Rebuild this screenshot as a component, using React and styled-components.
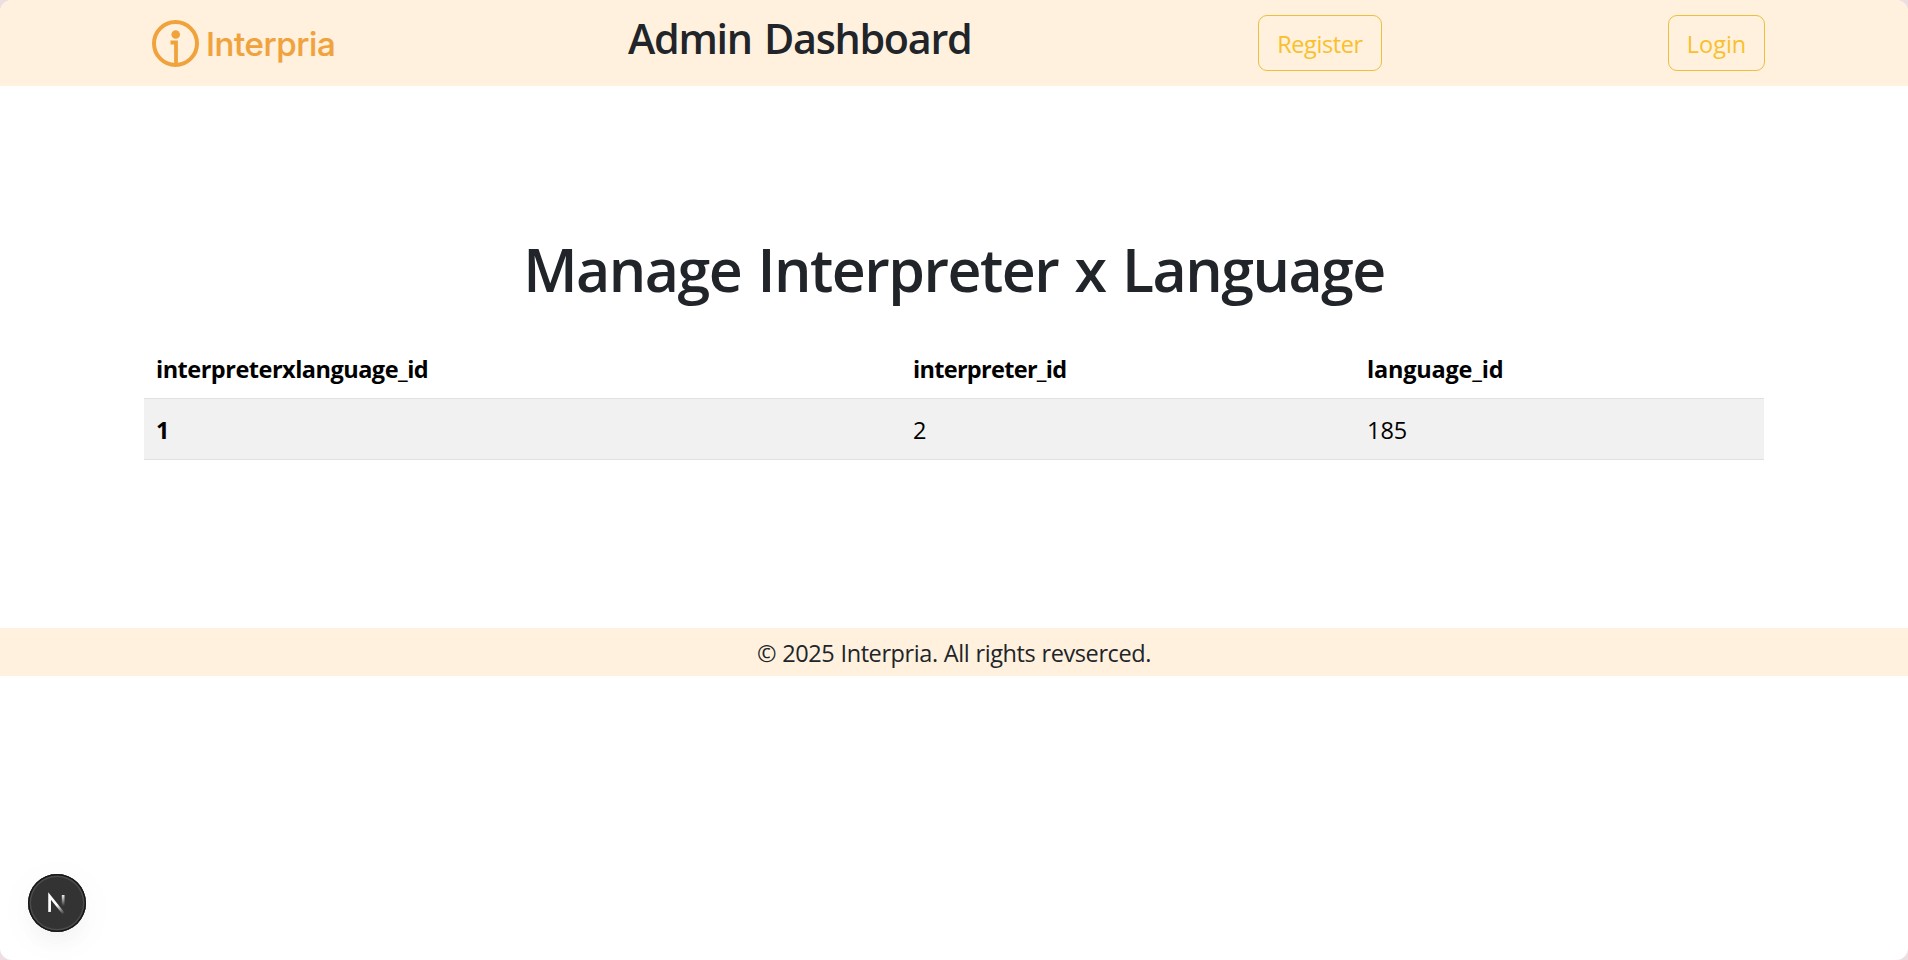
import React from "react";
import styled, { createGlobalStyle } from "styled-components";

const GlobalStyle = createGlobalStyle`
  *, *::before, *::after { box-sizing: border-box; }
  html { background: #eddfe1; }
  body {
    margin: 0;
    font-family: "Open Sans", "Noto Sans", sans-serif;
    font-size: 23.5px;
    line-height: 36px;
    color: #212529;
  }
  h1, h2, p { margin: 0; }
`;

const Page = styled.div`
  height: 960px;
  overflow: hidden;
  border-radius: 12px;
  background: #fff;
`;

const Header = styled.header`
  height: 86px;
  padding: 0 143px 0 151px;
  display: flex;
  align-items: center;
  background: #fff1de;
`;

const Brand = styled.div`
  width: 477px;
  padding-top: 1px;
  display: flex;
  align-items: center;
  gap: 6px;
  color: #f0a23c;
`;

const BrandName = styled.span`
  font: 500 33px/40px Inter, sans-serif;
  letter-spacing: -0.4px;
  -webkit-text-stroke: 0.2px currentColor;
`;

const HeaderTitle = styled.h2`
  width: 630px;
  padding-bottom: 10px;
  font-size: 41.3px;
  line-height: 50px;
  font-weight: 600;
  letter-spacing: -1.3px;
  word-spacing: 3px;
  white-space: nowrap;
`;

const Actions = styled.nav`
  flex: 1;
  display: flex;
  justify-content: space-between;
`;

const OutlineButton = styled.button`
  width: ${(p) => p.$width}px;
  height: 56px;
  padding: 1px 0 0;
  font: inherit;
  letter-spacing: ${(p) => p.$tracking || 0}px;
  color: #f8c02b;
  background: transparent;
  border: 1px solid #eac03e;
  border-radius: 9px;
`;

const Main = styled.main`
  height: 542px;
  padding: 143px 144px 0;
`;

const PageTitle = styled.h1`
  height: 108px;
  font-size: 59px;
  line-height: 80px;
  font-weight: 600;
  letter-spacing: -1.5px;
  word-spacing: 2.5px;
  text-align: center;
  white-space: nowrap;
`;

const Table = styled.table`
  width: 1620px;
  table-layout: fixed;
  border-collapse: collapse;
  color: #000;
`;

const Cell = styled.td`
  height: 61px;
  padding: ${(p) => (p.$striped ? "13px 12px 11px" : "14px 12px 10px")};
  text-align: left;
  font-weight: ${(p) => (p.$strong ? 700 : 400)};
  letter-spacing: ${(p) => p.$tracking || 0}px;
  background: ${(p) => (p.$striped ? "#f1f1f1" : "transparent")};
  border-bottom: 1px solid #dee0e2;
`;

const Footer = styled.footer`
  height: 48px;
  padding-top: 7px;
  letter-spacing: -0.4px;
  word-spacing: 0.4px;
  text-align: center;
  background: #fff1de;
`;

const DevBadge = styled.button`
  position: fixed;
  left: 28px;
  bottom: 28px;
  width: 58px;
  height: 58px;
  padding: 0;
  display: grid;
  place-items: center;
  border: 0;
  border-radius: 50%;
  background: #333;
  box-shadow: inset 0 0 0 1.5px #161616, inset 0 0 0 3px #4c4c4c, 0 16px 32px -8px rgba(0, 0, 0, 0.06), 0 8px 40px rgba(0, 0, 0, 0.04);
`;

const LogoMark = () => (
  <svg width="49" height="49" viewBox="0 0 49 49" fill="none" stroke="currentColor">
    <circle cx="24.5" cy="24.5" r="21.5" strokeWidth="4" />
    <circle cx="24.7" cy="15.5" r="4.3" fill="currentColor" stroke="none" />
    <path d="M19.5 23.5h5.5v22" strokeWidth="3.8" />
  </svg>
);

const NextMark = () => (
  <svg width="20" height="24" viewBox="0 0 20 24" fill="none" strokeWidth="2.7">
    <defs>
      <linearGradient id="diagonal" gradientUnits="userSpaceOnUse" x1="11" y1="13" x2="18" y2="22">
        <stop stopColor="#fff" />
        <stop offset="1" stopColor="#fff" stopOpacity="0" />
      </linearGradient>
      <linearGradient id="stem" gradientUnits="userSpaceOnUse" x1="16" y1="3" x2="16" y2="15">
        <stop stopColor="#fff" />
        <stop offset="1" stopColor="#fff" stopOpacity="0" />
      </linearGradient>
    </defs>
    <rect x="14.8" y="4" width="2.7" height="12" fill="url(#stem)" />
    <path d="M2.6 21V5L17 23" stroke="url(#diagonal)" />
  </svg>
);

const columns = [
  { name: "interpreterxlanguage_id", width: 757, tracking: -0.5 },
  { name: "interpreter_id", width: 454, tracking: -0.7 },
  { name: "language_id", width: 409, tracking: -0.2 },
];
const rows = [[1, 2, 185]];

export default function App() {
  return (
    <Page>
      <GlobalStyle />
      <Header>
        <Brand>
          <LogoMark />
          <BrandName>Interpria</BrandName>
        </Brand>
        <HeaderTitle>Admin Dashboard</HeaderTitle>
        <Actions>
          <OutlineButton $width={124} $tracking={-0.4}>Register</OutlineButton>
          <OutlineButton $width={97}>Login</OutlineButton>
        </Actions>
      </Header>
      <Main>
        <PageTitle>Manage Interpreter x Language</PageTitle>
        <Table>
          <colgroup>
            {columns.map((c) => <col key={c.name} width={c.width} />)}
          </colgroup>
          <thead>
            <tr>
              {columns.map((c) => <Cell as="th" $strong $tracking={c.tracking} key={c.name}>{c.name}</Cell>)}
            </tr>
          </thead>
          <tbody>
            {rows.map((row) => (
              <tr key={row[0]}>
                {row.map((value, i) => (
                  <Cell key={i} as={i ? "td" : "th"} $strong={i === 0} $striped>{value}</Cell>
                ))}
              </tr>
            ))}
          </tbody>
        </Table>
      </Main>
      <Footer><p>© 2025 Interpria. All rights revserced.</p></Footer>
      <DevBadge aria-label="Open developer tools"><NextMark /></DevBadge>
    </Page>
  );
}
